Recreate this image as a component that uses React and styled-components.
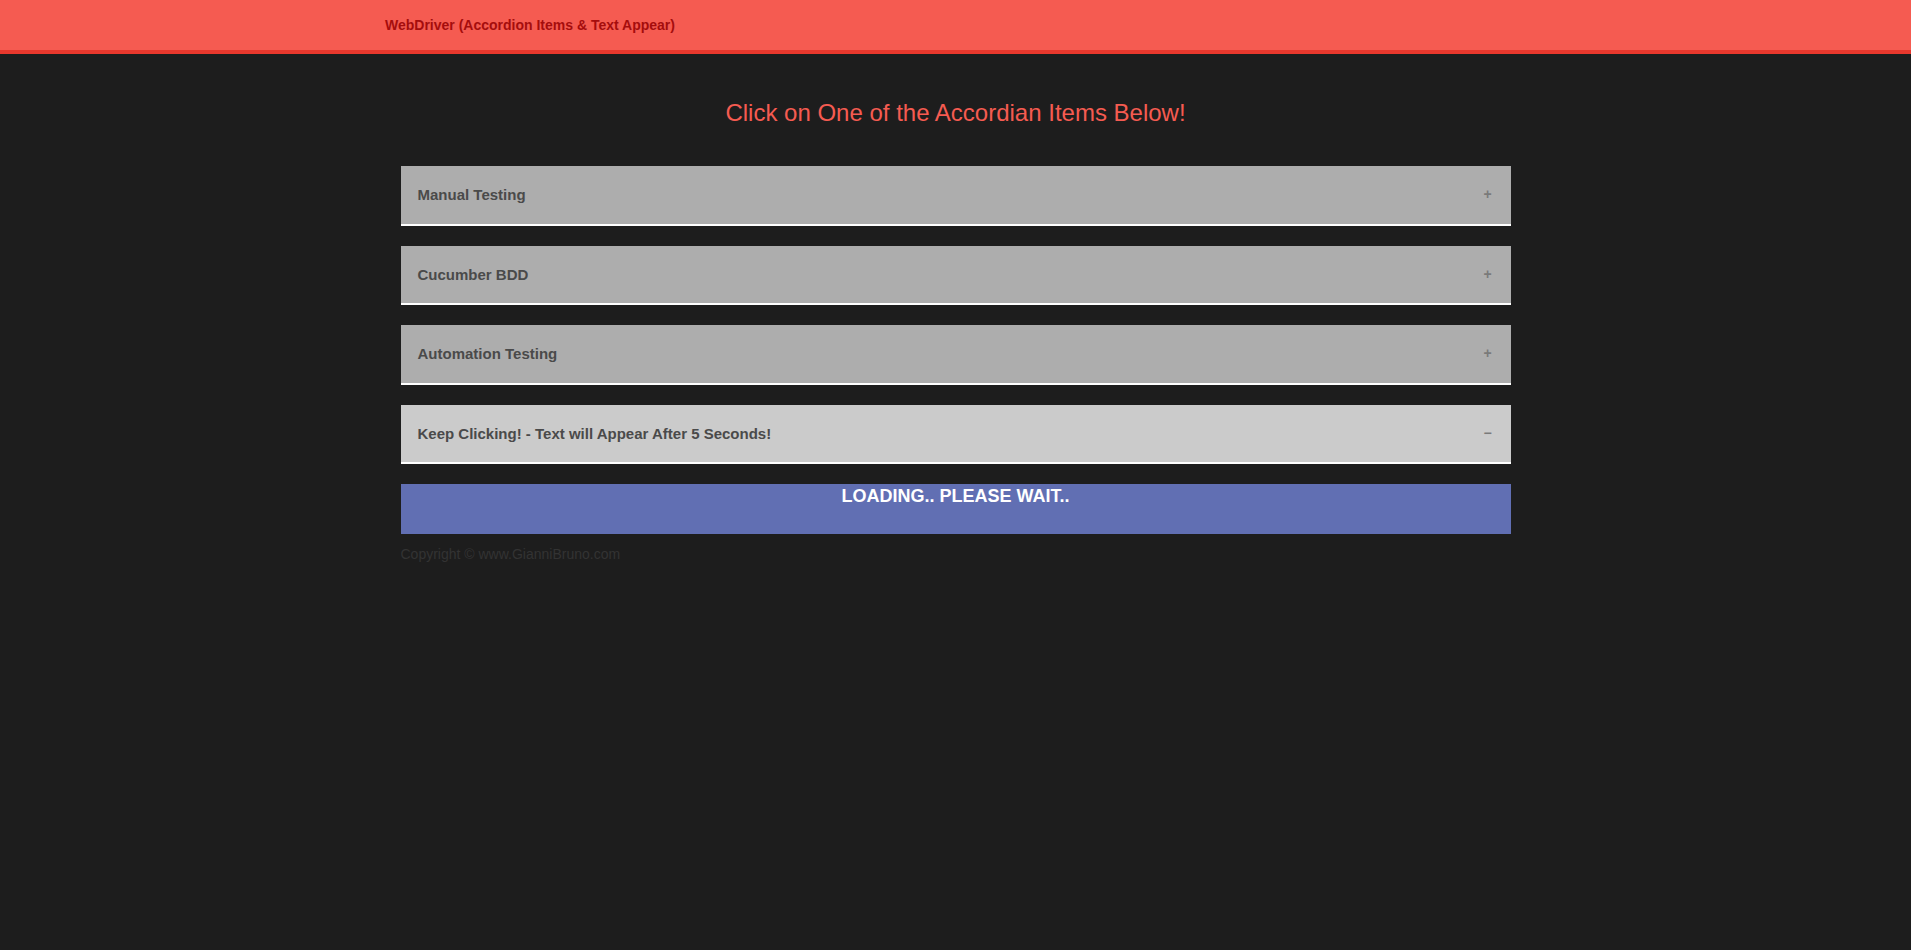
import React from "react";
import styled, { createGlobalStyle } from "styled-components";

const Global = createGlobalStyle`
  html, body { margin: 0; padding: 0; background: #1d1d1d; }
  body { font-family: "Liberation Sans", Arial, sans-serif; min-height: 950px; }
`;

const Header = styled.header`
  height: 50px;
  background: #f55b51;
  border-bottom: 4px solid #e8382d;
  display: flex;
  align-items: center;
  padding-left: 385px;
`;

const Brand = styled.div`
  font-size: 14px;
  font-weight: bold;
  color: #a50d0d;
  line-height: 18px;
  margin-top: -1px;
`;

const Main = styled.main`
  width: 1110px;
  margin: 0 auto;
  padding-top: 45px;
  display: flex;
  flex-direction: column;
`;

const Title = styled.h2`
  margin: 0 0 39px;
  font-size: 24px;
  line-height: 28px;
  font-weight: normal;
  text-align: center;
  color: #f55b51;
`;

const Item = styled.div`
  display: flex;
  align-items: center;
  justify-content: space-between;
  padding: 20px 19px 20px 17px;
  margin-bottom: 20px;
  background: ${(p) => (p.$open ? "#cbcbcb" : "#adadad")};
  border-bottom: 2px solid #ffffff;
  color: #4a4a4a;
  font-size: 15px;
  font-weight: bold;
  line-height: 17.5px;
  cursor: pointer;
`;

const Sign = styled.span`
  color: #7a7a7a;
  font-size: 14px;
  font-weight: bold;
  width: 8px;
  text-align: center;
`;

const Loading = styled.div`
  height: 50px;
  background: #616fb3;
  color: #ffffff;
  font-size: 18px;
  font-weight: bold;
  line-height: 20px;
  text-align: center;
  padding-top: 2px;
  box-sizing: border-box;
`;

const Copyright = styled.div`
  margin-top: 10px;
  font-size: 14px;
  line-height: 20px;
  color: #333333;
`;

const items = [
  { label: "Manual Testing", open: false },
  { label: "Cucumber BDD", open: false },
  { label: "Automation Testing", open: false },
  { label: "Keep Clicking! - Text will Appear After 5 Seconds!", open: true },
];

export default function App() {
  return (
    <>
      <Global />
      <Header>
        <Brand>WebDriver (Accordion Items &amp; Text Appear)</Brand>
      </Header>
      <Main>
        <Title>Click on One of the Accordian Items Below!</Title>
        {items.map((it) => (
          <Item key={it.label} $open={it.open}>
            <span>{it.label}</span>
            <Sign>{it.open ? "−" : "+"}</Sign>
          </Item>
        ))}
        <Loading>LOADING.. PLEASE WAIT..</Loading>
        <Copyright>Copyright © www.GianniBruno.com</Copyright>
      </Main>
    </>
  );
}
